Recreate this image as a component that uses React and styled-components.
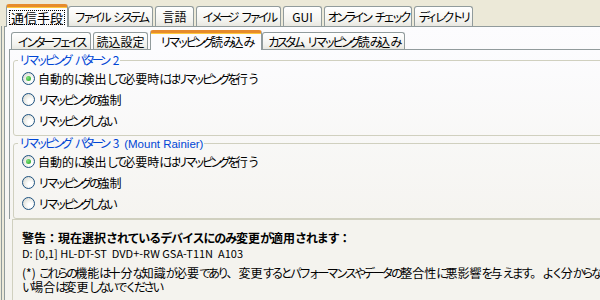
import React from 'react';
import styled, { createGlobalStyle, css } from 'styled-components';

const GlobalStyle = createGlobalStyle`
  body {
    margin: 0;
    background: #ece9d8;
    font-family: "Noto Sans CJK JP", "Liberation Sans", sans-serif;
    font-size: 12px;
    color: #000;
  }
`;

const Screen = styled.div`
  width: 600px;
  height: 300px;
  overflow: hidden;
  background: #ece9d8;
  word-spacing: 2px;
`;

// kana in the old Windows UI font are narrower than kanji
const Kana = styled.span`
  display: inline-block;
  letter-spacing: ${(p) => p.squeeze}px;
`;

const KANA = /([\u3040-\u30ff]+)/;

const Jp = ({ children, squeeze = -3.5 }) =>
  String(children)
    .split(KANA)
    .map((part, i) =>
      KANA.test(part) ? (
        <Kana key={i} squeeze={squeeze}>
          {part}
        </Kana>
      ) : (
        part
      )
    );

const TabRow = styled.div`
  display: flex;
  align-items: flex-end;
  gap: 2px;
  height: ${(p) => p.height}px;
  padding-left: ${(p) => p.indent}px;
  position: relative;
  z-index: 2;
`;

const Tab = styled.div`
  box-sizing: border-box;
  width: ${(p) => p.width}px;
  height: ${(p) => p.height}px;
  flex: none;
  display: flex;
  align-items: center;
  justify-content: center;
  white-space: nowrap;
  overflow: hidden;
  border: 1px solid #919b9c;
  border-bottom: none;
  border-radius: 3px 3px 0 0;
  background: linear-gradient(#ffffff, #f3f3ef 70%, #e8e7e0);
  font-size: 12px;
  line-height: 12px;
  padding-top: 1px;
  ${(p) =>
    p.active &&
    css`
      margin-right: -2px;
      margin-bottom: -1px;
      background: #fcfcfe;
      border-top: 3px solid #e68b2c;
      box-shadow: inset 0 1px 0 #ffc83c;
      padding-top: 0;
      font-size: ${p.big ? 13 : 12}px;
    `}
`;

const TabLabel = styled.span`
  ${(p) =>
    p.focus &&
    css`
      outline: 1px dotted #000;
      padding: 1px 1px 0;
    `}
`;

const Frame = styled.div`
  border-left: 1px solid #919b9c;
  margin-left: 1px;
  padding-left: 2px;
`;

const OuterPanel = styled.div`
  box-sizing: border-box;
  width: 700px;
  height: 280px;
  border: 1px solid #919b9c;
  background: linear-gradient(#fcfcfe, #f4f3ee 90%);
`;

const InnerPanel = styled.div`
  box-sizing: border-box;
  width: 700px;
  margin-left: 4px;
  border: 1px solid #919b9c;
  border-bottom: none;
  background: linear-gradient(#fcfcfe, #f5f4f0);
  padding: 4px 0 0 3px;
`;

const Group = styled.fieldset`
  margin: 0 0 ${(p) => p.gap}px 0;
  padding: 0 0 4px 8px;
  border: 1px solid #d0d0bf;
  border-radius: 3px;
  min-inline-size: 0;
`;

const GroupTitle = styled.legend`
  color: #0046d5;
  font-size: 12px;
  line-height: 12px;
  padding: 0 1px;
  margin-left: -4px;
  margin-bottom: ${(p) => p.space}px;
  white-space: nowrap;
`;

const Latin = styled.span`
  font-family: "Liberation Sans", sans-serif;
  font-size: 11.5px;
  word-spacing: 0;
`;

const RadioRow = styled.label`
  display: flex;
  align-items: center;
  height: 21px;
  gap: 3px;
  white-space: nowrap;
  font-size: 12px;
`;

const RadioDot = styled.span`
  box-sizing: border-box;
  width: 13px;
  height: 13px;
  border-radius: 50%;
  border: 1px solid #1c5180;
  background: radial-gradient(circle at 65% 65%, #ffffff 20%, #e8e8e2 60%, #d4d4cc);
  display: flex;
  align-items: center;
  justify-content: center;
  flex: none;
  &::after {
    content: '';
    display: ${(p) => (p.checked ? 'block' : 'none')};
    width: 5px;
    height: 5px;
    border-radius: 50%;
    background: radial-gradient(circle at 35% 35%, #7fe27c, #21a121);
  }
`;

const NotePanel = styled.div`
  box-sizing: border-box;
  margin-left: 7px;
  border-top: 1px solid #d0d0bf;
  border-left: 1px solid #d0d0bf;
  background: #f4f3ee;
  padding: 11px 0 0 9px;
  height: 100px;
  white-space: nowrap;
`;

const Warning = styled.div`
  font-weight: bold;
  font-size: 12px;
  line-height: 14px;
`;

const Device = styled.div`
  margin-top: 1px;
  line-height: 14px;
  font-size: 11px;
  word-spacing: 0;
`;

const Footnote = styled.div`
  margin-top: 6px;
  line-height: 14px;
  font-size: 12px;
  word-spacing: 0;
`;

const outerTabs = [
  { label: '通信手段', width: 62, active: true },
  { label: 'ファイル システム', width: 85 },
  { label: '言語', width: 39 },
  { label: 'イメージ ファイル', width: 85 },
  { label: 'GUI', width: 39 },
  { label: 'オンライン チェック', width: 88 },
  { label: 'ディレクトリ', width: 59 },
];

const innerTabs = [
  { label: 'インターフェイス', width: 80 },
  { label: '読込設定', width: 55 },
  { label: 'リマッピング読み込み', width: 112, active: true },
  { label: 'カスタム リマッピング読み込み', width: 143 },
];

const options = ['自動的に検出して必要時にはリマッピングを行う', 'リマッピングの強制', 'リマッピングしない'];

const RadioGroup = ({ title, gap, space }) => (
  <Group gap={gap}>
    <GroupTitle space={space}>{title}</GroupTitle>
    {options.map((o, i) => (
      <RadioRow key={o}>
        <RadioDot checked={i === 0} />
        <span>
          <Jp>{o}</Jp>
        </span>
      </RadioRow>
    ))}
  </Group>
);

export default function App() {
  return (
    <Screen>
      <GlobalStyle />
      <TabRow height={26} indent={6}>
        {outerTabs.map((t) => (
          <Tab key={t.label} width={t.width} height={t.active ? 23 : 20} active={t.active} big>
            <TabLabel focus={t.active}>
              <Jp>{t.label}</Jp>
            </TabLabel>
          </Tab>
        ))}
      </TabRow>
      <Frame>
        <OuterPanel>
          <TabRow height={22} indent={6}>
            {innerTabs.map((t) => (
              <Tab key={t.label} width={t.width} height={t.active ? 20 : 17} active={t.active}>
                <span>
                  <Jp>{t.label}</Jp>
                </span>
              </Tab>
            ))}
          </TabRow>
          <InnerPanel>
            <RadioGroup title={<Jp>リマッピング パターン 2</Jp>} gap={1} space={2} />
            <RadioGroup
              title={
                <>
                  <Jp>リマッピング パターン 3</Jp> <Latin>(Mount Rainier)</Latin>
                </>
              }
              gap={0}
              space={1}
            />
          </InnerPanel>
          <NotePanel>
            <Warning>
              <Jp squeeze={-1.1}>警告：現在選択されているデバイスにのみ変更が適用されます：</Jp>
            </Warning>
            <Device>D: [0,1] HL-DT-ST&nbsp; DVD+-RW GSA-T11N&nbsp; A103</Device>
            <Footnote>
              <Jp squeeze={-2.8}>(*) これらの機能は十分な知識が必要であり、変更するとパフォーマンスやデータの整合性に悪影響を与えます。よく分からな</Jp>
              <br />
              <Jp squeeze={-2.8}>い場合は変更しないでください</Jp>
            </Footnote>
          </NotePanel>
        </OuterPanel>
      </Frame>
    </Screen>
  );
}
